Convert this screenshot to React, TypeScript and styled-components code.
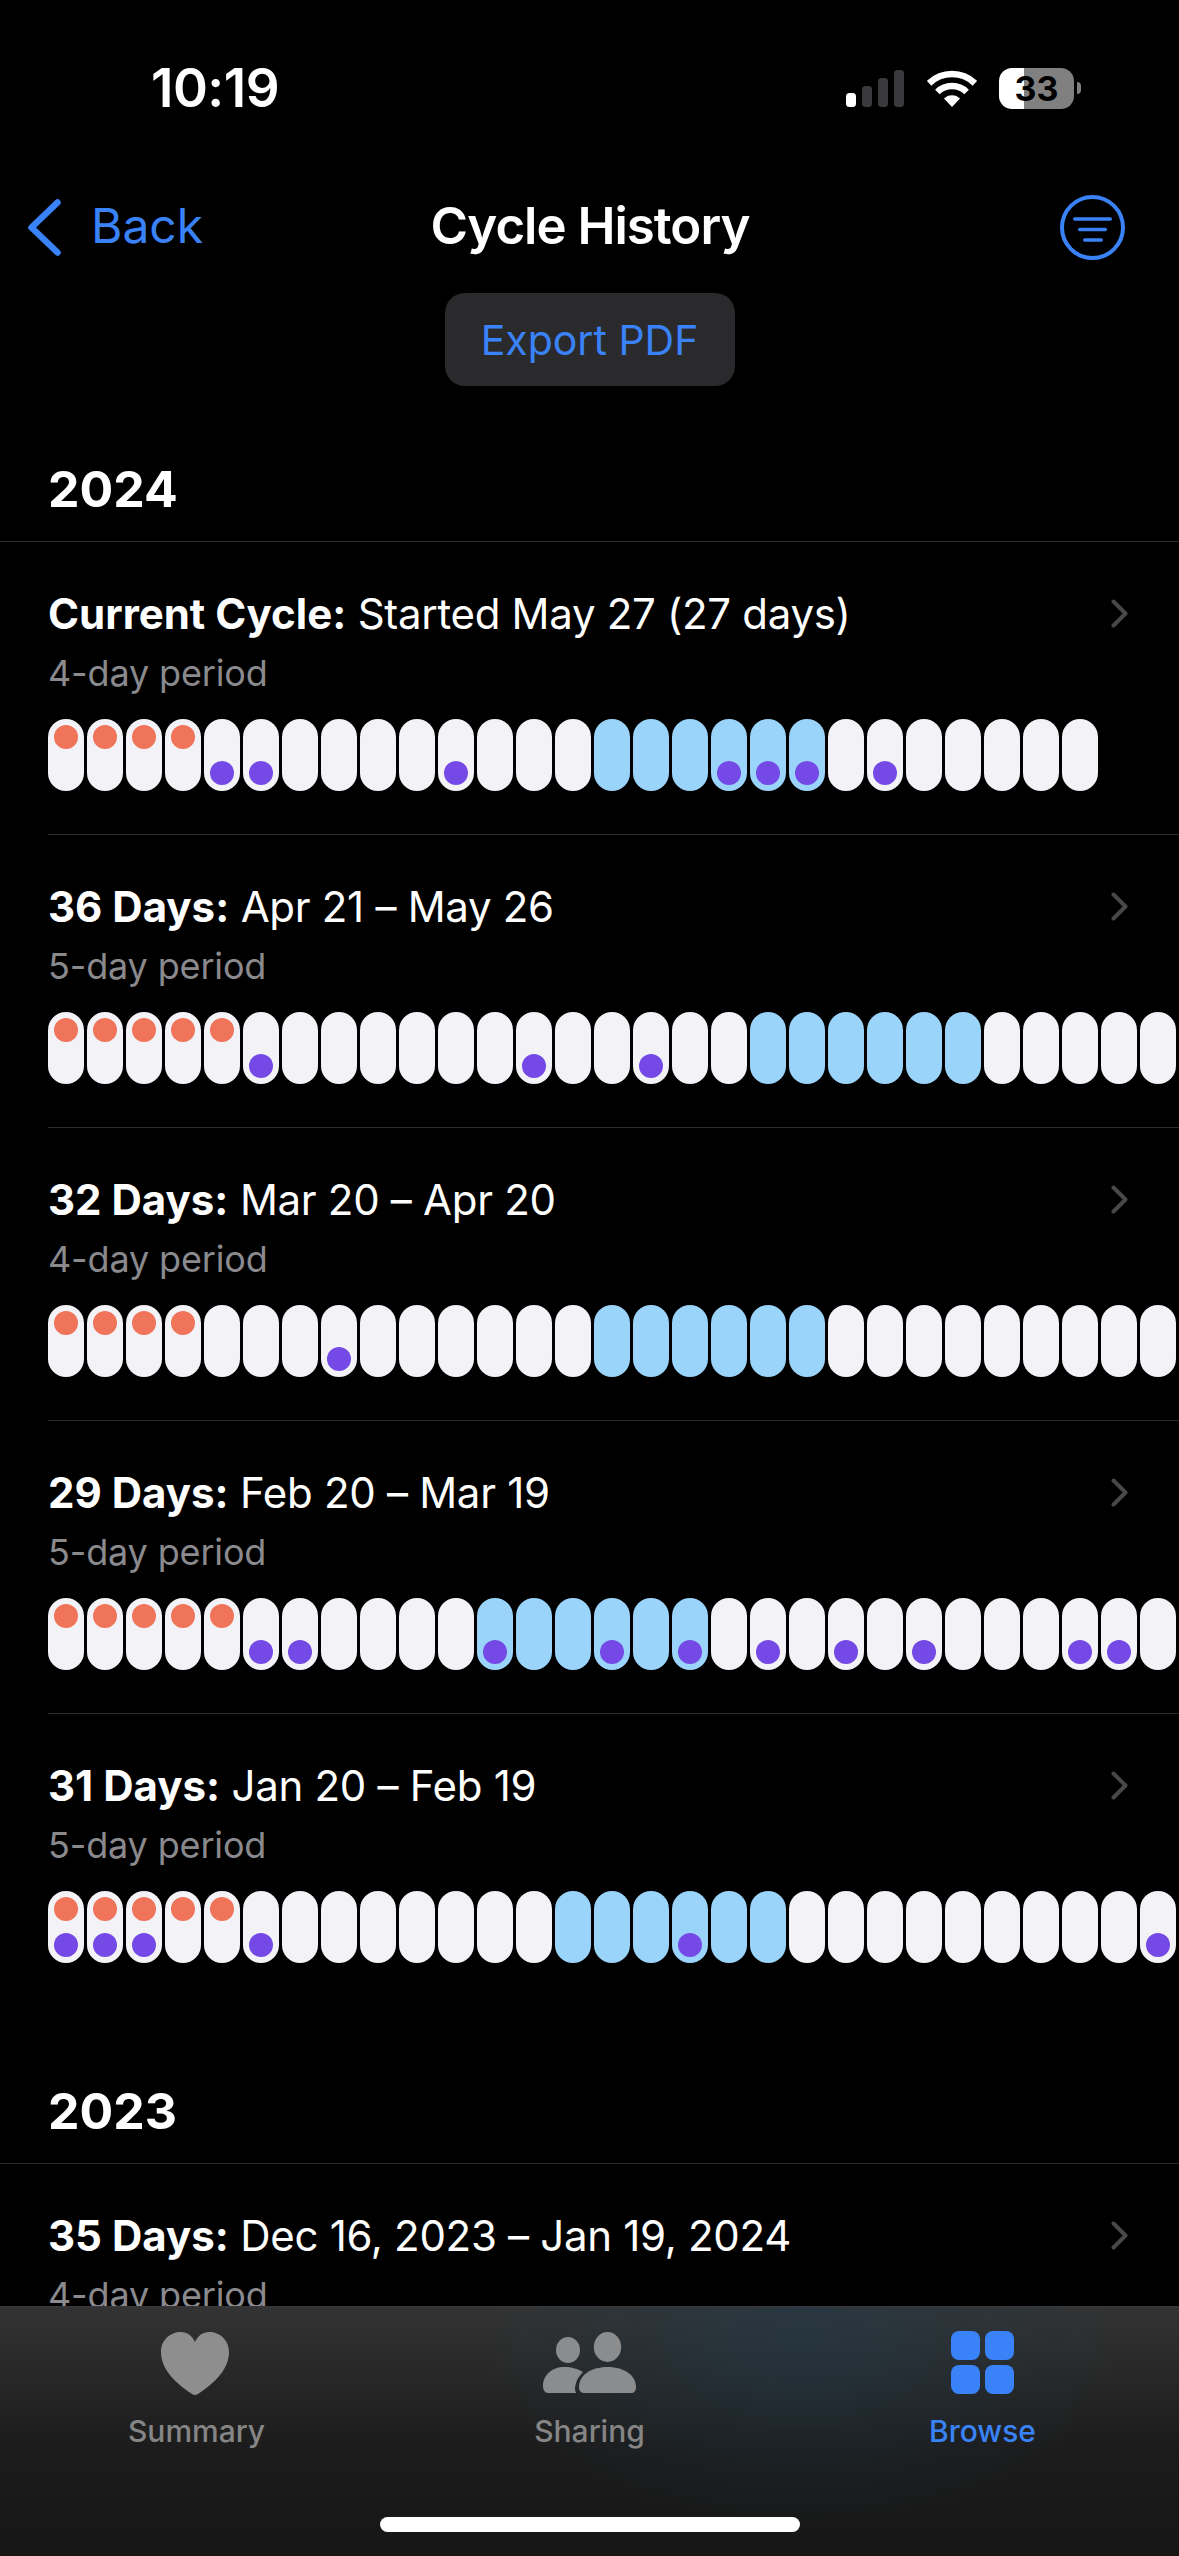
import React from 'react';
import styled, { createGlobalStyle } from 'styled-components';

type Cycle = {
  head: string;
  range: string;
  period: number;
  days: number;
  fertileStart: number;
  logged: number[];
};

const cycles2024: Cycle[] = [
  { head: 'Current Cycle:', range: 'Started May 27 (27 days)', period: 4, days: 27, fertileStart: 14, logged: [4, 5, 10, 17, 18, 19, 21] },
  { head: '36 Days:', range: 'Apr 21 – May 26', period: 5, days: 36, fertileStart: 18, logged: [5, 12, 15] },
  { head: '32 Days:', range: 'Mar 20 – Apr 20', period: 4, days: 32, fertileStart: 14, logged: [7] },
  { head: '29 Days:', range: 'Feb 20 – Mar 19', period: 5, days: 29, fertileStart: 11, logged: [5, 6, 11, 14, 16, 18, 20, 22, 26, 27] },
  { head: '31 Days:', range: 'Jan 20 – Feb 19', period: 5, days: 31, fertileStart: 13, logged: [0, 1, 2, 5, 16, 28] },
];

const GlobalStyle = createGlobalStyle`
  html, body {
    margin: 0;
    padding: 0;
    background: #000;
  }
  body {
    font-family: Inter, "Liberation Sans", sans-serif;
  }
`;

const Chevron = () => (
  <svg width="17" height="29" viewBox="0 0 17 29" fill="none">
    <path d="M2.500 2.500L14.500 14.500L2.500 26.500" stroke="#48484a" strokeWidth="4" strokeLinecap="round" strokeLinejoin="round" />
  </svg>
);

const CycleRow = ({ cycle, last }: { cycle: Cycle; last?: boolean }) => (
  <Row $last={last}>
    <TitleLine>
      <Title>
        <strong>{cycle.head}</strong> {cycle.range}
      </Title>
      <Chevron />
    </TitleLine>
    <Subtitle>{cycle.period}-day period</Subtitle>
    <Track>
      {Array.from({ length: Math.min(cycle.days, 30) }, (_, i) => (
        <Pill key={i} $fertile={i >= cycle.fertileStart && i < cycle.fertileStart + 6}>
          {i < cycle.period ? <Dot $color="#f0745a" /> : <span />}
          {cycle.logged.includes(i) && <Dot $color="#7449e6" />}
        </Pill>
      ))}
    </Track>
  </Row>
);

const App = () => {
  return (
    <Phone>
      <GlobalStyle />
      <Scroll>
        <StatusBar>
          <Time>10:19</Time>
          <StatusIcons>
            <svg width="58" height="37" viewBox="0 0 58 37">
              <rect x="0" y="23" width="10" height="14" rx="3.500" fill="#fff" />
              <rect x="16" y="16" width="10" height="21" rx="3.500" fill="#3a3a3c" />
              <rect x="32" y="8" width="10" height="29" rx="3.500" fill="#3a3a3c" />
              <rect x="48" y="0" width="10" height="37" rx="3.500" fill="#3a3a3c" />
            </svg>
            <svg width="50" height="37" viewBox="0 0 50 37" fill="none">
              <path d="M2.100 13.300A33 33 0 0 1 47.900 13.300" stroke="#fff" strokeWidth="6.500" />
              <path d="M10.400 22A21 21 0 0 1 39.600 22" stroke="#fff" strokeWidth="6.500" />
              <path d="M25 37L17 28.600A11 11 0 0 1 33 28.600Z" fill="#fff" />
            </svg>
            <Battery>33</Battery>
            <BatteryNub />
          </StatusIcons>
        </StatusBar>

        <NavBar>
          <BackLink>
            <svg width="33" height="57" viewBox="0 0 33 57" fill="none">
              <path d="M29.500 3.500L3.500 28.500L29.500 53.500" stroke="#3a82f7" strokeWidth="6.500" strokeLinecap="round" strokeLinejoin="round" />
            </svg>
            <BackLabel>Back</BackLabel>
          </BackLink>
          <NavTitle>Cycle History</NavTitle>
          <FilterButton>
            <svg width="65" height="65" viewBox="0 0 65 65" fill="none" stroke="#3a82f7" strokeLinecap="round">
              <circle cx="32.500" cy="32.500" r="30.500" strokeWidth="4" />
              <path d="M14.750 24H50.250M19.750 34.500H45.250M24.750 45H41.250" strokeWidth="3.500" />
            </svg>
          </FilterButton>
        </NavBar>

        <ExportRow>
          <ExportButton>Export PDF</ExportButton>
        </ExportRow>

        <YearHeader>2024</YearHeader>
        {cycles2024.map((c, i) => (
          <CycleRow key={c.head} cycle={c} last={i === cycles2024.length - 1} />
        ))}

        <YearHeader>2023</YearHeader>
        <Row $last>
          <TitleLine>
            <Title>
              <strong>35 Days:</strong> Dec 16, 2023 – Jan 19, 2024
            </Title>
            <Chevron />
          </TitleLine>
          <Subtitle>4-day period</Subtitle>
        </Row>
      </Scroll>

      <TabBar>
        <Tabs>
          <Tab>
            <svg width="71" height="64" viewBox="0 0 71 64">
              <path
                d="M34 63C32.500 63 31 62 29.500 61C12 49 0 36 0 20C0 8 9 0 20 0C26 0 31 3.500 34 10C37 3.500 42 0 48 0C59 0 68 8 68 20C68 36 56 49 38.500 61C37 62 35.500 63 34 63Z"
                fill="#8f8e8e"
              />
            </svg>
            <TabLabel>Summary</TabLabel>
          </Tab>
          <Tab>
            <svg width="93" height="64" viewBox="0 0 93 64" fill="#8b8c8e">
              <ellipse cx="25" cy="18" rx="12" ry="13" />
              <ellipse cx="64.500" cy="15" rx="13.700" ry="15" />
              <path d="M0 54C0 43 9 35 21 35C29 35 35 37 40 40C35 45 32 51 32 58L33 61H5C2 61 0 58 0 54Z" />
              <path d="M36 55C36 44 47 35 64.500 35C82 35 93 44 93 55C93 59 91 61 88 61H42C38 61 36 59 36 55Z" />
            </svg>
            <TabLabel>Sharing</TabLabel>
          </Tab>
          <Tab>
            <GridIcon>
              <GridCell />
              <GridCell />
              <GridCell />
              <GridCell />
            </GridIcon>
            <TabLabel $active>Browse</TabLabel>
          </Tab>
        </Tabs>
        <HomeIndicator />
      </TabBar>
    </Phone>
  );
};

export default App;

const Phone = styled.div`
  display: flex;
  flex-direction: column;
  width: 1179px;
  height: 2556px;
  overflow: hidden;
  background: #000;
  color: #fff;
`;

const Scroll = styled.div`
  flex: 1;
  min-height: 0;
  overflow: hidden;
`;

const StatusBar = styled.div`
  display: flex;
  justify-content: space-between;
  align-items: center;
  height: 176px;
  padding: 0 98px 0 151px;
  box-sizing: border-box;
`;

const Time = styled.div`
  font-size: 53px;
  font-weight: 600;
  letter-spacing: -0.5px;
`;

const StatusIcons = styled.div`
  display: flex;
  align-items: center;
  svg + svg {
    margin-left: 23px;
  }
`;

const Battery = styled.div`
  display: flex;
  align-items: center;
  justify-content: center;
  width: 75px;
  height: 41px;
  margin-left: 22px;
  border-radius: 13px;
  background: linear-gradient(90deg, #fff 33%, #808080 33%);
  color: #000;
  font-size: 34px;
  font-weight: 700;
`;

const BatteryNub = styled.div`
  width: 4px;
  height: 12px;
  margin-left: 3px;
  border-radius: 0 6px 6px 0;
  background: #808080;
`;

const NavBar = styled.div`
  display: grid;
  grid-template-columns: 1fr auto 1fr;
  align-items: center;
  height: 102px;
  padding: 0 27px 0 28px;
`;

const BackLink = styled.div`
  display: flex;
  align-items: center;
  gap: 30px;
  font-size: 48px;
  color: #3a82f7;
`;

const BackLabel = styled.span`
  padding-bottom: 3px;
`;

const NavTitle = styled.div`
  padding-bottom: 3px;
  font-size: 51px;
  font-weight: 600;
  letter-spacing: -1px;
`;

const FilterButton = styled.div`
  display: flex;
  justify-content: flex-end;
  padding-right: 27px;
`;

const ExportRow = styled.div`
  display: flex;
  justify-content: center;
  padding-top: 15px;
`;

const ExportButton = styled.div`
  display: flex;
  align-items: center;
  justify-content: center;
  width: 290px;
  height: 93px;
  border-radius: 20px;
  background: #2a2a2c;
  color: #3a82f7;
  font-size: 41px;
`;

const YearHeader = styled.div`
  display: flex;
  align-items: flex-end;
  box-sizing: border-box;
  height: 156px;
  padding: 0 48px 20px;
  border-bottom: 1px solid #2c2c2e;
  font-size: 50px;
  line-height: 64px;
  font-weight: 700;
`;

const Row = styled.div<{ $last?: boolean }>`
  box-sizing: border-box;
  height: ${(p) => (p.$last ? '294px' : '293px')};
  margin-left: 48px;
  padding-top: 41px;
  border-bottom: 1px solid ${(p) => (p.$last ? 'transparent' : '#2c2c2e')};
`;

const TitleLine = styled.div`
  display: flex;
  justify-content: space-between;
  align-items: center;
  height: 60px;
  padding-right: 51px;
`;

const Title = styled.div`
  font-size: 42px;
  font-weight: 400;
  letter-spacing: -0.3px;
  strong {
    font-weight: 700;
    letter-spacing: 0;
  }
`;

const Subtitle = styled.div`
  height: 60px;
  line-height: 60px;
  font-size: 36px;
  letter-spacing: -0.15px;
  color: #8a8a8e;
`;

const Track = styled.div`
  display: flex;
  gap: 3px;
  margin-top: 16px;
`;

const Pill = styled.div<{ $fertile: boolean }>`
  display: flex;
  flex: none;
  flex-direction: column;
  justify-content: space-between;
  align-items: center;
  box-sizing: border-box;
  width: 36px;
  height: 72px;
  padding: 6px 0;
  border-radius: 18px;
  background: ${(p) => (p.$fertile ? '#9bd4fb' : '#f2f2f7')};
`;

const Dot = styled.div<{ $color: string }>`
  width: 24px;
  height: 24px;
  border-radius: 50%;
  background: ${(p) => p.$color};
`;

const TabBar = styled.div`
  display: flex;
  flex: none;
  flex-direction: column;
  box-sizing: border-box;
  height: 250px;
  border-top: 1px solid #38383a;
  background:
    radial-gradient(ellipse 320px 190px at 68% 12%, rgba(30, 62, 84, 0.45), transparent),
    linear-gradient(180deg, #333 0%, #1c1c1c 55%, #161616 100%);
`;

const Tabs = styled.div`
  display: grid;
  grid-template-columns: 1fr 1fr 1fr;
  padding-top: 25px;
`;

const Tab = styled.div`
  display: flex;
  flex-direction: column;
  align-items: center;
`;

const TabLabel = styled.div<{ $active?: boolean }>`
  margin-top: 17px;
  font-size: 30px;
  line-height: 36px;
  font-weight: 500;
  color: ${(p) => (p.$active ? '#3a82f7' : '#858585')};
`;

const GridIcon = styled.div`
  display: grid;
  grid-template-columns: 29px 29px;
  grid-auto-rows: 29px;
  gap: 5px;
  height: 65px;
  margin-top: -1px;
`;

const GridCell = styled.div`
  border-radius: 8px;
  background: #3a82f7;
`;

const HomeIndicator = styled.div`
  width: 420px;
  height: 15px;
  margin: auto auto 24px;
  border-radius: 8px;
  background: #fff;
`;
